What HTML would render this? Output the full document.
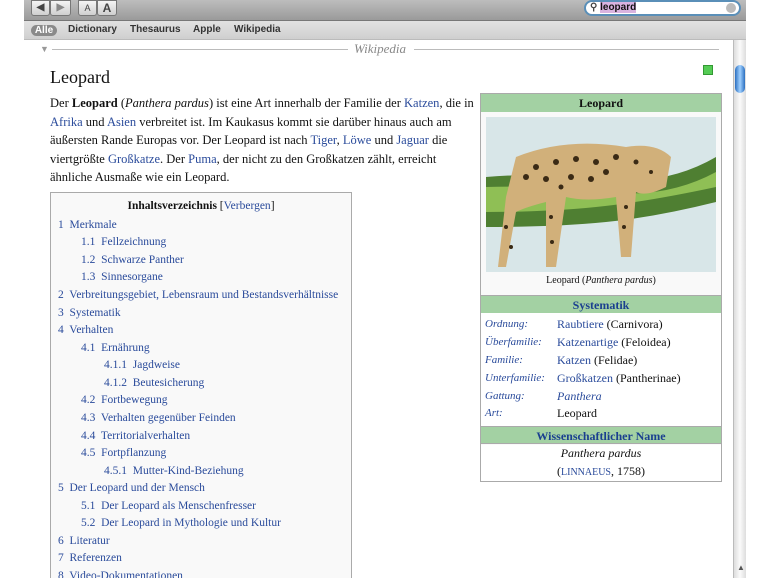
<!DOCTYPE html>
<html><head><meta charset="utf-8"><style>
*{margin:0;padding:0;box-sizing:border-box}
html,body{width:770px;height:578px;overflow:hidden}
body{background:#fff;font-family:"Liberation Serif",serif;color:#111;position:relative}
a,.l{color:#2a4b9b;text-decoration:none}
.tb{position:absolute;left:24px;top:0;width:722px;height:21px;background:linear-gradient(#bdbdbd,#9a9a9a);border-bottom:1px solid #777}
.btn{position:absolute;top:0;height:16px;background:linear-gradient(#f4f4f4,#cfcfcf);border:1px solid #777;border-radius:0 0 3px 3px;font:bold 10px "Liberation Sans",sans-serif;color:#444;text-align:center;line-height:14px}
.search{position:absolute;left:584px;top:0;width:157px;height:16px;background:#fff;border:2px solid #5a8fb8;border-radius:8px;font:bold 10px "Liberation Sans",sans-serif;padding-left:4px;line-height:12px}
.tabs{position:absolute;left:24px;top:21px;width:722px;height:19px;background:linear-gradient(#e2e2e2,#cfcfcf);border-bottom:1px solid #bbb;font:bold 10px "Liberation Sans",sans-serif;color:#333}
.tabs span{position:absolute;top:3px}
.sb{position:absolute;left:733px;top:40px;width:13px;height:538px;background:linear-gradient(90deg,#ddd,#fafafa,#ddd);border-left:1px solid #bbb}
.thumb{position:absolute;left:735px;top:65px;width:10px;height:28px;border-radius:5px;background:linear-gradient(90deg,#2b6fc0,#9fd0ff,#2b6fc0)}
.p{position:absolute;left:50px;top:94px;width:425px;font-size:12.5px;line-height:18.6px}
.toc{position:absolute;left:50px;top:192px;width:302px;height:400px;background:#f9f9f9;border:1px solid #aaa;font-size:11.5px}
.toc div{position:absolute;white-space:nowrap;color:#2a4b9b}
.ib{position:absolute;left:480px;top:93px;width:242px;height:389px;border:1px solid #aaa;background:#f9f9f9;font-size:12px}
.h{position:absolute;left:0;width:240px;height:18px;background:#a3d1a3;text-align:center;font-weight:bold;font-size:12px;line-height:18px}
.r{position:absolute;font-size:12px}
.k{position:absolute;left:4px;font-style:italic;color:#2a4b9b;font-size:11px}
</style></head><body>
<div class="tb">
<div class="btn" style="left:7px;width:19px">◀</div><div class="btn" style="left:26px;width:21px;color:#888">▶</div>
<div class="btn" style="left:54px;width:19px;font-weight:normal;font-size:9px">A</div><div class="btn" style="left:73px;width:20px;font-size:12px">A</div>
</div>
<div class="search"><span style="color:#444">⚲</span> <span style="background:#d9b3e0">leopard</span><span style="position:absolute;right:3px;top:1px;width:10px;height:10px;border-radius:5px;background:#bbb"></span></div>
<div class="tabs">
<span style="left:7px;top:4px;background:#8a8a8a;color:#fff;border-radius:6px;width:26px;text-align:center;line-height:11px">Alle</span>
<span style="left:44px">Dictionary</span><span style="left:106px">Thesaurus</span><span style="left:169px">Apple</span><span style="left:210px">Wikipedia</span>
</div>
<div style="position:absolute;left:40px;top:44px;color:#999;font-size:9px">▼</div>
<div style="position:absolute;left:52px;top:49px;width:296px;height:1px;background:#bbb"></div>
<div style="position:absolute;left:354px;top:41px;font-style:italic;color:#888;font-size:13px">Wikipedia</div>
<div style="position:absolute;left:414px;top:49px;width:305px;height:1px;background:#bbb"></div>
<div style="position:absolute;left:703px;top:65px;width:10px;height:10px;background:#5c5;border:1px solid #393"></div>
<div style="position:absolute;left:50px;top:67px;font-size:18px">Leopard</div>
<div class="p">Der <b>Leopard</b> (<i>Panthera pardus</i>) ist eine Art innerhalb der Familie der <a>Katzen</a>, die in <a>Afrika</a> und <a>Asien</a> verbreitet ist. Im Kaukasus kommt sie darüber hinaus auch am äußersten Rande Europas vor. Der Leopard ist nach <a>Tiger</a>, <a>Löwe</a> und <a>Jaguar</a> die viertgrößte <a>Großkatze</a>. Der <a>Puma</a>, der nicht zu den Großkatzen zählt, erreicht ähnliche Ausmaße wie ein Leopard.</div>
<div class="toc">
<div style="left:0;width:300px;text-align:center;top:7px;color:#111"><b>Inhaltsverzeichnis</b> [<a>Verbergen</a>]</div>
<div style="left:7px;top:26px">1&nbsp; Merkmale</div>
<div style="left:30px;top:43px">1.1&nbsp; Fellzeichnung</div>
<div style="left:30px;top:61px">1.2&nbsp; Schwarze Panther</div>
<div style="left:30px;top:78px">1.3&nbsp; Sinnesorgane</div>
<div style="left:7px;top:96px">2&nbsp; Verbreitungsgebiet, Lebensraum und Bestandsverhältnisse</div>
<div style="left:7px;top:114px">3&nbsp; Systematik</div>
<div style="left:7px;top:131px">4&nbsp; Verhalten</div>
<div style="left:30px;top:149px">4.1&nbsp; Ernährung</div>
<div style="left:53px;top:166px">4.1.1&nbsp; Jagdweise</div>
<div style="left:53px;top:184px">4.1.2&nbsp; Beutesicherung</div>
<div style="left:30px;top:201px">4.2&nbsp; Fortbewegung</div>
<div style="left:30px;top:219px">4.3&nbsp; Verhalten gegenüber Feinden</div>
<div style="left:30px;top:237px">4.4&nbsp; Territorialverhalten</div>
<div style="left:30px;top:254px">4.5&nbsp; Fortpflanzung</div>
<div style="left:53px;top:272px">4.5.1&nbsp; Mutter-Kind-Beziehung</div>
<div style="left:7px;top:289px">5&nbsp; Der Leopard und der Mensch</div>
<div style="left:30px;top:307px">5.1&nbsp; Der Leopard als Menschenfresser</div>
<div style="left:30px;top:324px">5.2&nbsp; Der Leopard in Mythologie und Kultur</div>
<div style="left:7px;top:342px">6&nbsp; Literatur</div>
<div style="left:7px;top:359px">7&nbsp; Referenzen</div>
<div style="left:7px;top:377px">8&nbsp; Video-Dokumentationen</div>
</div>
<div class="ib">
<div class="h" style="top:0">Leopard</div>
<svg style="position:absolute;left:5px;top:23px" width="230" height="155" viewBox="0 0 230 155">
<rect width="230" height="155" fill="#d8e6e8"/>
<path d="M0 60 Q60 55 120 62 T230 40 L230 85 Q170 100 120 105 T0 110Z" fill="#4f7f32"/>
<path d="M0 70 Q60 68 120 75 T230 55 L230 70 Q160 85 110 90 T0 95Z" fill="#8fbf55"/>
<path d="M30 40 Q80 20 140 30 Q170 25 185 40 L180 70 Q160 80 150 75 L145 140 L135 140 L130 80 Q100 85 80 80 L70 150 L60 150 L60 85 Q40 90 30 95 L20 150 L12 150 L20 80Z" fill="#d1b07a"/>
<g fill="#3a2a15"><circle cx="50" cy="50" r="3"/><circle cx="70" cy="45" r="3"/><circle cx="90" cy="42" r="3"/><circle cx="110" cy="45" r="3"/><circle cx="130" cy="40" r="3"/><circle cx="60" cy="62" r="3"/><circle cx="85" cy="60" r="3"/><circle cx="105" cy="62" r="3"/><circle cx="40" cy="60" r="3"/><circle cx="120" cy="55" r="3"/><circle cx="75" cy="70" r="2.5"/><circle cx="150" cy="45" r="2.5"/><circle cx="140" cy="90" r="2"/><circle cx="138" cy="110" r="2"/><circle cx="65" cy="100" r="2"/><circle cx="66" cy="125" r="2"/><circle cx="20" cy="110" r="2"/><circle cx="165" cy="55" r="2"/><circle cx="25" cy="130" r="2"/></g>
</svg>
<div class="r" style="top:181px;left:0;width:240px;text-align:center;font-size:10px">Leopard (<i>Panthera pardus</i>)</div>
<div class="h" style="top:201px;color:#1a3f8f;border-top:1px solid #aaa">Systematik</div>
<div style="position:absolute;top:219px;left:0;width:240px;height:113px;background:#fff"></div>
<div class="k" style="top:224px">Ordnung:</div><div class="r" style="left:76px;top:223px"><a>Raubtiere</a> (Carnivora)</div>
<div class="k" style="top:242px">Überfamilie:</div><div class="r" style="left:76px;top:241px"><a>Katzenartige</a> (Feloidea)</div>
<div class="k" style="top:260px">Familie:</div><div class="r" style="left:76px;top:259px"><a>Katzen</a> (Felidae)</div>
<div class="k" style="top:278px">Unterfamilie:</div><div class="r" style="left:76px;top:277px"><a>Großkatzen</a> (Pantherinae)</div>
<div class="k" style="top:296px">Gattung:</div><div class="r" style="left:76px;top:295px"><i class="l">Panthera</i></div>
<div class="k" style="top:313px">Art:</div><div class="r" style="left:76px;top:312px">Leopard</div>
<div class="h" style="top:332px;color:#1a3f8f;border-top:1px solid #aaa;border-bottom:1px solid #aaa">Wissenschaftlicher Name</div>
<div style="position:absolute;top:351px;left:0;width:240px;height:36px;background:#fff"></div>
<div class="r" style="top:352px;left:0;width:240px;text-align:center"><i>Panthera pardus</i></div>
<div class="r" style="top:370px;left:0;width:240px;text-align:center">(<a style="font-size:10px">LINNAEUS</a>, 1758)</div>
</div>
<div class="sb"></div><div class="thumb"></div>
<div style="position:absolute;left:737px;top:563px;font-size:8px;color:#555">▲</div>
</body></html>
